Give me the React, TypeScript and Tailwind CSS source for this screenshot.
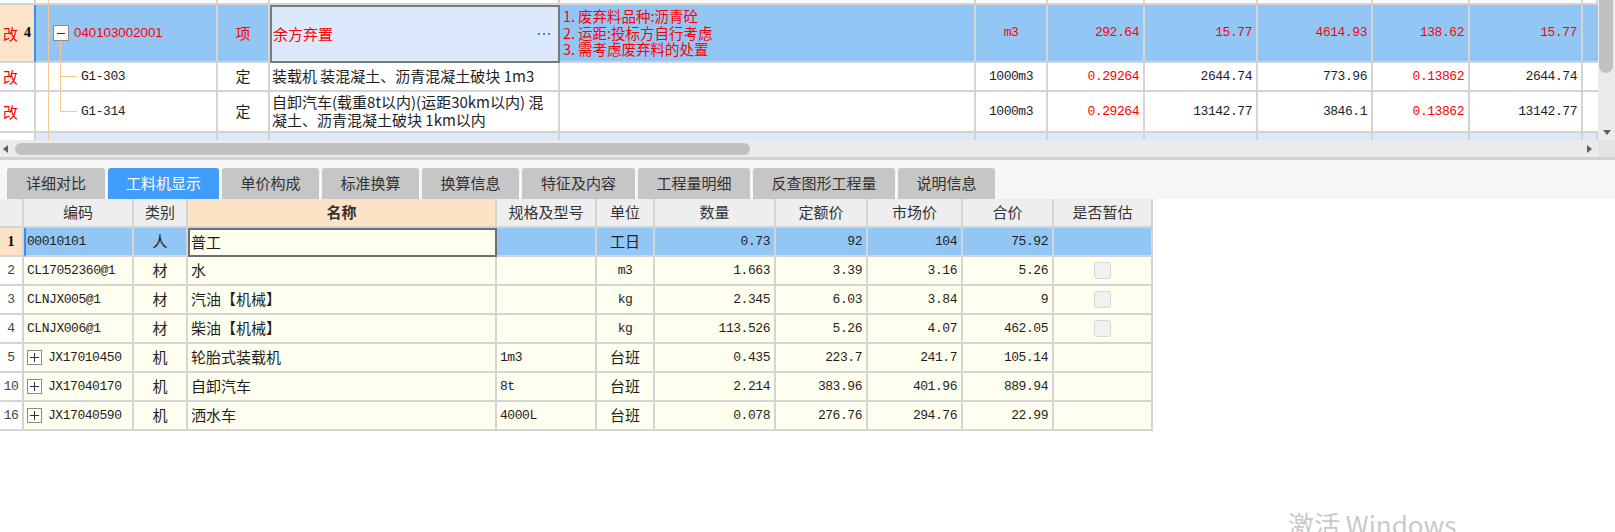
import React from 'react';

const cjk = "font-['Noto_Sans_CJK_SC',sans-serif]";
const mono = "font-['Liberation_Mono','Noto_Sans_CJK_SC',monospace] text-[13px] tracking-[-0.45px]";
const gl = 'border-r-2 border-b-2 border-[#d4d4d4]';
const red = 'text-[#ff0000]';

// top grid column widths (x: 36,218,270,560,976,1048,1145,1258,1373,1470,1583,1598)
const TW = ['w-[36px]', 'w-[182px]', 'w-[52px]', 'w-[290px]', 'w-[416px]', 'w-[72px]', 'w-[97px]', 'w-[113px]', 'w-[115px]', 'w-[97px]', 'w-[113px]', 'w-[15px]'];
// bottom grid column widths
const BW = ['w-[24px]', 'w-[110px]', 'w-[54px]', 'w-[309px]', 'w-[100px]', 'w-[58px]', 'w-[121px]', 'w-[92px]', 'w-[95px]', 'w-[91px]', 'w-[99px]'];

const orange = 'bg-[#f6c78f]';

function Tree({ kind }: { kind: 'root' | 'mid' | 'last' | 'none' }) {
  return (
    <>
      <span className={`absolute left-[12px] top-0 bottom-0 w-px ${orange}`} />
      {kind === 'root' && (
        <>
          <span className={`absolute left-[12px] top-[28px] w-[5px] h-px ${orange}`} />
          <span className={`absolute left-[24px] top-[36px] bottom-0 w-px ${orange}`} />
          <span className="absolute left-[17px] top-[20px] w-[16px] h-[16px] border border-[#8c8c8c] bg-white flex items-center justify-center">
            <span className="w-[8px] h-px bg-[#333]" />
          </span>
        </>
      )}
      {kind === 'mid' && (
        <>
          <span className={`absolute left-[24px] top-0 bottom-0 w-px ${orange}`} />
          <span className={`absolute left-[24px] top-[13px] w-[17px] h-px ${orange}`} />
        </>
      )}
      {kind === 'last' && (
        <>
          <span className={`absolute left-[24px] top-0 h-[19px] w-px ${orange}`} />
          <span className={`absolute left-[24px] top-[19px] w-[17px] h-px ${orange}`} />
        </>
      )}
    </>
  );
}

function Num({ v, w, isRed }: { v: string; w: string; isRed?: boolean }) {
  return (
    <div className={`${w} ${gl} h-full flex items-center justify-end pr-[4px] ${mono} ${isRed ? red : 'text-[#1e1e1e]'}`}>
      {v}
    </div>
  );
}

function TopGrid() {
  return (
    <div className="h-[140px] overflow-hidden">
      {/* partial row above */}
      <div className="flex h-[5px] bg-white">
        {TW.map((w, i) => (
          <div key={i} className={`${w} h-full ${gl} relative`}>{i === 1 && <Tree kind="none" />}</div>
        ))}
      </div>

      {/* selected row */}
      <div className="flex h-[58px] bg-[#92c7f5]">
        <div className={`${TW[0]} h-full bg-[#fde4c9] border-r-2 border-r-[#3b8ef0] border-b-2 border-b-[#d4d4d4] flex items-center pl-[3px]`}>
          <span className={`text-[15px] leading-none ${red}`}>改</span>
          <span className="ml-[6px] text-[14px] leading-none font-bold font-['Liberation_Serif',serif] text-black">4</span>
        </div>
        <div className={`${TW[1]} h-full ${gl} relative flex items-center pl-[38px]`}>
          <Tree kind="root" />
          <span className={`font-['Liberation_Sans',sans-serif] text-[13.3px] ${red}`}>040103002001</span>
        </div>
        <div className={`${TW[2]} h-full ${gl} flex items-center justify-center text-[15px] ${red}`}>项</div>
        <div className={`${TW[3]} h-full border-2 border-[#7a7a7a] bg-[#dce9fc] flex items-center justify-between pl-[1px] pr-[8px]`}>
          <span className={`text-[15px] ${red}`}>余方弃置</span>
          <span className="flex gap-[3px]">
            <span className="w-[2px] h-[2px] bg-[#3a87e0]" />
            <span className="w-[2px] h-[2px] bg-[#3a87e0]" />
            <span className="w-[2px] h-[2px] bg-[#3a87e0]" />
          </span>
        </div>
        <div className={`${TW[4]} h-full ${gl} flex flex-col justify-center pl-[3px] text-[14.5px] leading-[16.5px] ${red}`}>
          <span>1.&#8201;废弃料品种:沥青砼</span>
          <span>2.&#8201;运距:投标方自行考虑</span>
          <span>3.&#8201;需考虑废弃料的处置</span>
        </div>
        <div className={`${TW[5]} h-full ${gl} flex items-center justify-center ${mono} ${red}`}>m3</div>
        <Num w={TW[6]} v="292.64" isRed />
        <Num w={TW[7]} v="15.77" isRed />
        <Num w={TW[8]} v="4614.93" isRed />
        <Num w={TW[9]} v="138.62" isRed />
        <Num w={TW[10]} v="15.77" isRed />
        <div className={`${TW[11]} h-full border-b-2 border-[#d4d4d4]`} />
      </div>

      {/* G1-303 */}
      <div className="flex h-[29px] bg-white">
        <div className={`${TW[0]} h-full ${gl} flex items-center pl-[3px]`}>
          <span className={`text-[15px] leading-none ${red}`}>改</span>
        </div>
        <div className={`${TW[1]} h-full ${gl} relative flex items-center pl-[45px] ${mono}`}>
          <Tree kind="mid" />
          G1-303
        </div>
        <div className={`${TW[2]} h-full ${gl} flex items-center justify-center text-[15px]`}>定</div>
        <div className={`${TW[3]} h-full ${gl} flex items-center pl-[2px] text-[15px] whitespace-nowrap`}>装载机 装混凝土、沥青混凝土破块 1m3</div>
        <div className={`${TW[4]} h-full ${gl}`} />
        <div className={`${TW[5]} h-full ${gl} flex items-center justify-center ${mono}`}>1000m3</div>
        <Num w={TW[6]} v="0.29264" isRed />
        <Num w={TW[7]} v="2644.74" />
        <Num w={TW[8]} v="773.96" />
        <Num w={TW[9]} v="0.13862" isRed />
        <Num w={TW[10]} v="2644.74" />
        <div className={`${TW[11]} h-full border-b-2 border-[#d4d4d4]`} />
      </div>

      {/* G1-314 */}
      <div className="flex h-[41px] bg-white">
        <div className={`${TW[0]} h-full ${gl} flex items-center pl-[3px]`}>
          <span className={`text-[15px] leading-none ${red}`}>改</span>
        </div>
        <div className={`${TW[1]} h-full ${gl} relative flex items-center pl-[45px] ${mono}`}>
          <Tree kind="last" />
          G1-314
        </div>
        <div className={`${TW[2]} h-full ${gl} flex items-center justify-center text-[15px]`}>定</div>
        <div className={`${TW[3]} h-full ${gl} flex flex-col justify-center pb-[2px] pl-[2px] text-[15px] leading-[18px] whitespace-nowrap`}>
          <span>自卸汽车(载重8t以内)(运距30km以内) 混</span>
          <span>凝土、沥青混凝土破块 1km以内</span>
        </div>
        <div className={`${TW[4]} h-full ${gl}`} />
        <div className={`${TW[5]} h-full ${gl} flex items-center justify-center ${mono}`}>1000m3</div>
        <Num w={TW[6]} v="0.29264" isRed />
        <Num w={TW[7]} v="13142.77" />
        <Num w={TW[8]} v="3846.1" />
        <Num w={TW[9]} v="0.13862" isRed />
        <Num w={TW[10]} v="13142.77" />
        <div className={`${TW[11]} h-full border-b-2 border-[#d4d4d4]`} />
      </div>

      {/* partial row below */}
      <div className="flex h-[7px] bg-[#dde9fb]">
        {TW.map((w, i) => (
          <div key={i} className={`${w} h-full border-r-2 border-[#d4d4d4] relative ${i === 0 ? 'bg-white' : ''}`}>
            {i === 1 && <Tree kind="none" />}
          </div>
        ))}
      </div>
    </div>
  );
}

function HScroll() {
  return (
    <div className="h-[17px] bg-[#ebebeb] flex items-center">
      <span className="ml-[3px] border-y-[4px] border-y-transparent border-r-[5px] border-r-[#606060]" />
      <span className="ml-[7px] w-[735px] h-[12px] rounded-full bg-[#c1c1c1]" />
      <span className="flex-1" />
      <span className="mr-[6px] border-y-[4px] border-y-transparent border-l-[5px] border-l-[#606060]" />
    </div>
  );
}

function VScroll() {
  return (
    <div className="w-[17px] h-[157px] flex flex-col">
      <div className="h-[140px] bg-[#ebebeb] flex flex-col items-center">
        <span className="ml-[-2px] w-[14px] h-[73px] rounded-b-[7px] bg-[#c1c1c1]" />
        <span className="flex-1" />
        <span className="mb-[5px] border-x-[4px] border-x-transparent border-t-[5px] border-t-[#606060]" />
      </div>
      <div className="h-[17px] bg-[#e3e3e3]" />
    </div>
  );
}

const tabs = [
  { t: '详细对比', w: 'w-[98px]' },
  { t: '工料机显示', w: 'w-[111px]', on: true },
  { t: '单价构成', w: 'w-[97px]' },
  { t: '标准换算', w: 'w-[97px]' },
  { t: '换算信息', w: 'w-[97px]' },
  { t: '特征及内容', w: 'w-[113px]' },
  { t: '工程量明细', w: 'w-[112px]' },
  { t: '反查图形工程量', w: 'w-[142px]' },
  { t: '说明信息', w: 'w-[97px]' },
];

function Tabs() {
  return (
    <div className="h-[42px] border-t-[3px] border-[#d2d2d2] bg-[#f6f6f6] flex items-end gap-[3px] pl-[7px]">
      {tabs.map((tab) => (
        <div
          key={tab.t}
          className={`${tab.w} h-[31px] rounded-t-[3px] flex items-center justify-center text-[15px] ${
            tab.on ? 'bg-[#409dfa] text-white' : 'bg-[#c6c6c6] text-[#333]'
          }`}
        >
          {tab.t}
        </div>
      ))}
    </div>
  );
}

const heads = ['', '编码', '类别', '名称', '规格及型号', '单位', '数量', '定额价', '市场价', '合价', '是否暂估'];

type Row = { n: string; code: string; plus?: boolean; cat: string; name: string; spec: string; unit: string; q: string; p1: string; p2: string; sum: string; chk?: boolean };

const rows: Row[] = [
  { n: '2', code: 'CL17052360@1', cat: '材', name: '水', spec: '', unit: 'm3', q: '1.663', p1: '3.39', p2: '3.16', sum: '5.26', chk: true },
  { n: '3', code: 'CLNJX005@1', cat: '材', name: '汽油【机械】', spec: '', unit: 'kg', q: '2.345', p1: '6.03', p2: '3.84', sum: '9', chk: true },
  { n: '4', code: 'CLNJX006@1', cat: '材', name: '柴油【机械】', spec: '', unit: 'kg', q: '113.526', p1: '5.26', p2: '4.07', sum: '462.05', chk: true },
  { n: '5', code: 'JX17010450', plus: true, cat: '机', name: '轮胎式装载机', spec: '1m3', unit: '台班', q: '0.435', p1: '223.7', p2: '241.7', sum: '105.14' },
  { n: '10', code: 'JX17040170', plus: true, cat: '机', name: '自卸汽车', spec: '8t', unit: '台班', q: '2.214', p1: '383.96', p2: '401.96', sum: '889.94' },
  { n: '16', code: 'JX17040590', plus: true, cat: '机', name: '洒水车', spec: '4000L', unit: '台班', q: '0.078', p1: '276.76', p2: '294.76', sum: '22.99' },
];

const isUnitCjk = (u: string) => /[^\x00-\x7f]/.test(u);

function BottomTable() {
  return (
    <div className="w-[1153px]">
      <div className="flex h-[29px] bg-[#eeeeee]">
        {heads.map((h, i) => (
          <div
            key={i}
            className={`${BW[i]} h-full ${gl} flex items-center justify-center text-[15px] text-[#333] ${
              i === 3 ? 'bg-[#fde3c6] font-bold text-[#111]' : ''
            }`}
          >
            {h}
          </div>
        ))}
      </div>

      {/* selected row */}
      <div className="flex h-[29px] bg-[#92c7f5]">
        <div className={`${BW[0]} h-full ${gl} bg-[#fde3c6] flex items-center justify-center text-[14px] font-bold font-['Liberation_Serif',serif] text-black`}>1</div>
        <div className={`${BW[1]} h-full ${gl} border-l-2 border-l-[#3b8ef0] flex items-center pl-[1px] ${mono}`}>00010101</div>
        <div className={`${BW[2]} h-full ${gl} flex items-center justify-center text-[15px]`}>人</div>
        <div className={`${BW[3]} h-full border-2 border-[#6e6e6e] bg-[#fffff0] flex items-center pl-[1px] text-[15px]`}>普工</div>
        <div className={`${BW[4]} h-full ${gl}`} />
        <div className={`${BW[5]} h-full ${gl} flex items-center justify-center text-[15px]`}>工日</div>
        <Num w={BW[6]} v="0.73" />
        <Num w={BW[7]} v="92" />
        <Num w={BW[8]} v="104" />
        <Num w={BW[9]} v="75.92" />
        <div className={`${BW[10]} h-full ${gl}`} />
      </div>

      {rows.map((r) => (
        <div key={r.n} className="flex h-[29px] bg-[#fffff0]">
          <div className={`${BW[0]} h-full ${gl} bg-white flex items-center justify-center ${mono} text-[#444]`}>{r.n}</div>
          <div className={`${BW[1]} h-full ${gl} flex items-center pl-[3px] ${mono}`}>
            {r.plus && (
              <span className="mr-[6px] w-[15px] h-[15px] border border-[#8a8a8a] bg-white relative flex items-center justify-center">
                <span className="absolute w-[9px] h-px bg-[#333]" />
                <span className="absolute w-px h-[9px] bg-[#333]" />
              </span>
            )}
            {r.code}
          </div>
          <div className={`${BW[2]} h-full ${gl} flex items-center justify-center text-[15px]`}>{r.cat}</div>
          <div className={`${BW[3]} h-full ${gl} flex items-center pl-[3px] text-[15px]`}>{r.name}</div>
          <div className={`${BW[4]} h-full ${gl} flex items-center pl-[3px] ${mono}`}>{r.spec}</div>
          <div className={`${BW[5]} h-full ${gl} flex items-center justify-center ${isUnitCjk(r.unit) ? 'text-[15px]' : mono}`}>{r.unit}</div>
          <Num w={BW[6]} v={r.q} />
          <Num w={BW[7]} v={r.p1} />
          <Num w={BW[8]} v={r.p2} />
          <Num w={BW[9]} v={r.sum} />
          <div className={`${BW[10]} h-full ${gl} flex items-center justify-center`}>
            {r.chk && <span className="w-[17px] h-[17px] rounded-[3px] border border-[#d6d6d6] bg-[#f1f1f1]" />}
          </div>
        </div>
      ))}
    </div>
  );
}

export default function App() {
  return (
    <div className={`relative w-[1615px] h-[532px] overflow-hidden bg-white text-[#1e1e1e] ${cjk}`}>
      <div className="flex h-[157px]">
        <div className="w-[1598px] flex flex-col">
          <TopGrid />
          <HScroll />
        </div>
        <VScroll />
      </div>
      <Tabs />
      <BottomTable />
      <div className="absolute left-[1288px] top-[511px] text-[26px] leading-none text-[#c9c9c9] whitespace-nowrap">激活 Windows</div>
    </div>
  );
}
